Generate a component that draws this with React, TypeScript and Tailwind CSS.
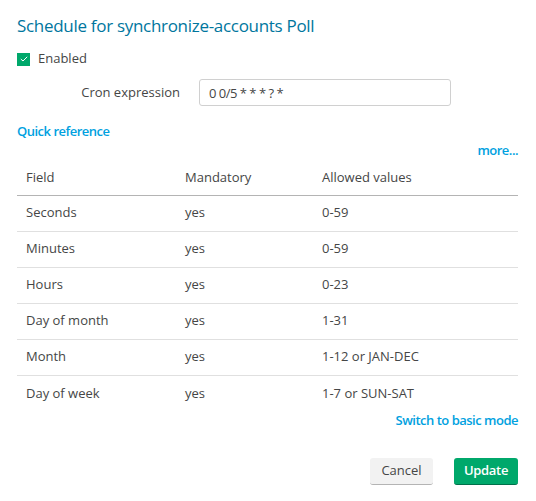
import React from 'react';

const rows = [
  { field: 'Seconds', mandatory: 'yes', allowed: '0-59' },
  { field: 'Minutes', mandatory: 'yes', allowed: '0-59' },
  { field: 'Hours', mandatory: 'yes', allowed: '0-23' },
  { field: 'Day of month', mandatory: 'yes', allowed: '1-31' },
  { field: 'Month', mandatory: 'yes', allowed: '1-12 or JAN-DEC' },
  { field: 'Day of week', mandatory: 'yes', allowed: '1-7 or SUN-SAT' },
];

export default function App() {
  return (
    <div className="w-[536px] h-[501px] bg-white text-[#454646] text-[13px] font-['Open_Sans',sans-serif] pl-[17px] pr-[18px] pt-[14px]">
      <h1 className="text-[17px] leading-6 tracking-[-0.3px] text-[#00769e]">Schedule for synchronize-accounts Poll</h1>

      <label className="mt-[11px] flex items-center gap-[8px] h-5">
        <span className="w-[13px] h-[13px] bg-[#00a86b] flex items-center justify-center">
          <svg width="8" height="6" viewBox="0 0 8 6" fill="none">
            <path d="M0.8 3 L3 5 L7.2 0.8" stroke="white" strokeWidth="1" />
          </svg>
        </span>
        <span>Enabled</span>
      </label>

      <div className="mt-[10px] flex items-center">
        <span className="w-[182px] text-right pr-[19px]">Cron expression</span>
        <input
          className="w-[252px] h-[27px] border border-[#d0d0d0] rounded-[3px] px-[9px] text-[13px] tracking-[-0.5px] text-[#454646] outline-none"
          defaultValue="0 0/5 * * * ? *"
        />
      </div>

      <div className="mt-[15px] text-[#00a1e0] font-semibold tracking-[-0.5px] leading-5">Quick reference</div>

      <div className="text-right text-[#00a1e0] font-semibold tracking-[-0.5px] leading-5 -mt-px">more...</div>

      <table className="w-full border-collapse">
        <thead>
          <tr className="border-b border-[#b4b4b4] h-[35px]">
            <th className="w-[159px] text-left font-normal pl-[9px]">Field</th>
            <th className="w-[137px] text-left font-normal pl-[9px]">Mandatory</th>
            <th className="text-left font-normal pl-[9px]">Allowed values</th>
          </tr>
        </thead>
        <tbody>
          {rows.map((r, i) => (
            <tr key={r.field} className={`h-9 ${i < rows.length - 1 ? 'border-b border-[#e0e0e0]' : ''}`}>
              <td className="pl-[9px]">{r.field}</td>
              <td className="pl-[9px]">{r.mandatory}</td>
              <td className="pl-[9px]">{r.allowed}</td>
            </tr>
          ))}
        </tbody>
      </table>

      <div className="text-right text-[#00a1e0] font-semibold tracking-[-0.5px] leading-[18px]">Switch to basic mode</div>

      <div className="mt-[29px] flex justify-end gap-[21px]">
        <button className="h-[27px] w-[63px] rounded-[3px] bg-[#f2f2f2] border-b border-[#b4b4b4] text-[#454646]">
          Cancel
        </button>
        <button className="h-[27px] w-[64px] rounded-[3px] bg-[#00a86b] border-b border-[#00704a] text-white font-semibold tracking-[-0.3px]">
          Update
        </button>
      </div>
    </div>
  );
}
